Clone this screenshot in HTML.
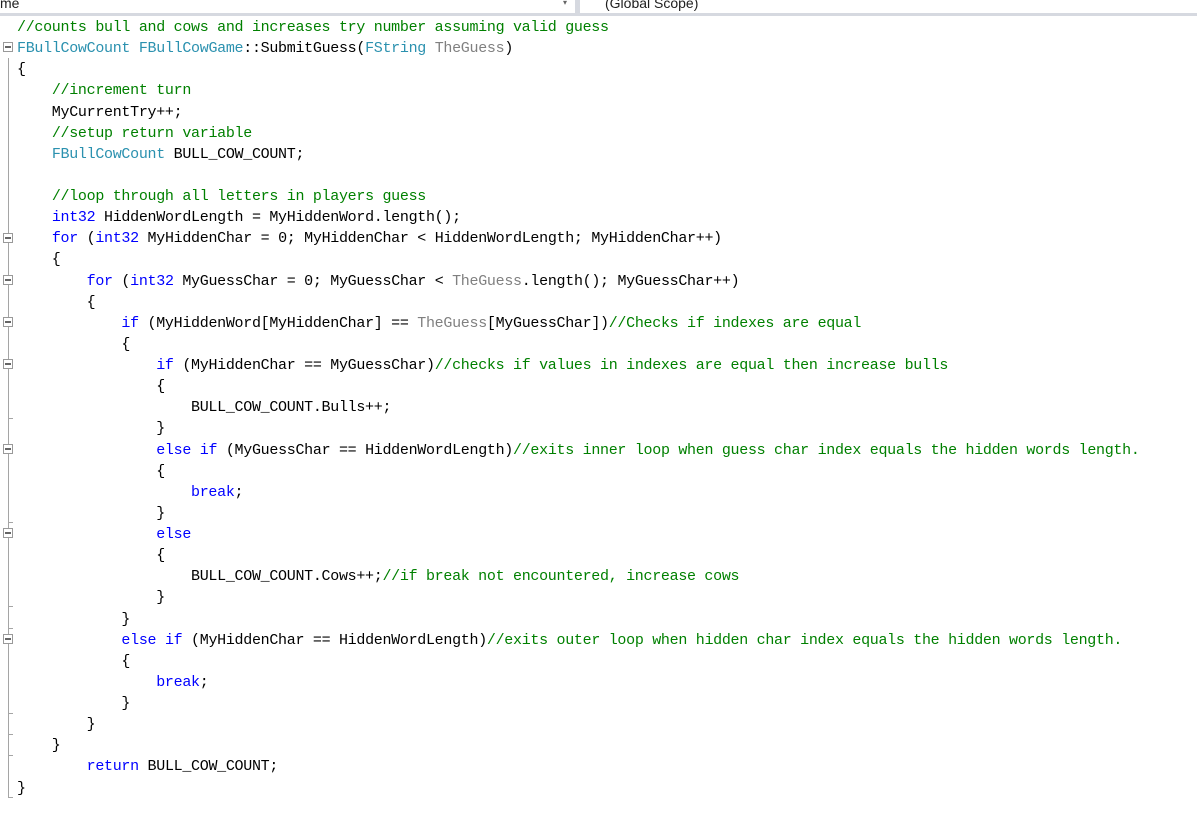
<!DOCTYPE html>
<html><head><style>
body{margin:0;width:1197px;height:834px;background:#fff;overflow:hidden;position:relative;font-family:"Liberation Mono",monospace}
.hdr{position:absolute;left:0;top:0;width:1197px;height:13px;background:#fff;border-bottom:3px solid #d6d9e0;font-family:"Liberation Sans",sans-serif;font-size:14px;color:#1e1e1e}
.code{position:absolute;left:17px;top:17px;font-size:15px;letter-spacing:-0.3px;line-height:21.13px;white-space:pre;color:#000}
.c{color:#008000}.k{color:#0000ff}.t{color:#2b91af}.p{color:#808080}
.g{position:absolute;left:8px;width:1px;background:#a5a5a5}
.f{position:absolute;left:3px;width:10px;height:10px;border:1px solid #999;background:#fff;box-sizing:border-box}
.f:after{content:"";position:absolute;left:1px;top:3px;width:6px;height:2px;background:#666}
.tk{position:absolute;left:8px;width:5px;height:1px;background:#a5a5a5}
</style></head><body>
<div class="hdr"><span style="position:absolute;left:0;top:-5px">me</span>
<span style="position:absolute;left:563px;top:-2px;font-size:8px;color:#666">▾</span>
<div style="position:absolute;left:575px;top:0;width:5px;height:13px;background:#d6d9e0"></div>
<span style="position:absolute;left:605px;top:-5px">(Global Scope)</span></div>
<div class="g" style="top:58px;height:740px"></div>
<div class="f" style="top:42px"></div>
<div class="f" style="top:233px"></div>
<div class="f" style="top:275px"></div>
<div class="f" style="top:317px"></div>
<div class="f" style="top:359px"></div>
<div class="f" style="top:444px"></div>
<div class="f" style="top:528px"></div>
<div class="f" style="top:634px"></div>
<div class="tk" style="top:418px"></div>
<div class="tk" style="top:522px"></div>
<div class="tk" style="top:606px"></div>
<div class="tk" style="top:628px"></div>
<div class="tk" style="top:713px"></div>
<div class="tk" style="top:734px"></div>
<div class="tk" style="top:755px"></div>
<div class="tk" style="top:797px"></div>
<div class="code"><span class="c">//counts bull and cows and increases try number assuming valid guess</span>
<span class="t">FBullCowCount</span> <span class="t">FBullCowGame</span>::SubmitGuess(<span class="t">FString</span> <span class="p">TheGuess</span>)
{
    <span class="c">//increment turn</span>
    MyCurrentTry++;
    <span class="c">//setup return variable</span>
    <span class="t">FBullCowCount</span> BULL_COW_COUNT;

    <span class="c">//loop through all letters in players guess</span>
    <span class="k">int32</span> HiddenWordLength = MyHiddenWord.length();
    <span class="k">for</span> (<span class="k">int32</span> MyHiddenChar = 0; MyHiddenChar &lt; HiddenWordLength; MyHiddenChar++)
    {
        <span class="k">for</span> (<span class="k">int32</span> MyGuessChar = 0; MyGuessChar &lt; <span class="p">TheGuess</span>.length(); MyGuessChar++)
        {
            <span class="k">if</span> (MyHiddenWord[MyHiddenChar] == <span class="p">TheGuess</span>[MyGuessChar])<span class="c">//Checks if indexes are equal</span>
            {
                <span class="k">if</span> (MyHiddenChar == MyGuessChar)<span class="c">//checks if values in indexes are equal then increase bulls</span>
                {
                    BULL_COW_COUNT.Bulls++;
                }
                <span class="k">else</span> <span class="k">if</span> (MyGuessChar == HiddenWordLength)<span class="c">//exits inner loop when guess char index equals the hidden words length.</span>
                {
                    <span class="k">break</span>;
                }
                <span class="k">else</span>
                {
                    BULL_COW_COUNT.Cows++;<span class="c">//if break not encountered, increase cows</span>
                }
            }
            <span class="k">else</span> <span class="k">if</span> (MyHiddenChar == HiddenWordLength)<span class="c">//exits outer loop when hidden char index equals the hidden words length.</span>
            {
                <span class="k">break</span>;
            }
        }
    }
        <span class="k">return</span> BULL_COW_COUNT;
}</div>
</body></html>
